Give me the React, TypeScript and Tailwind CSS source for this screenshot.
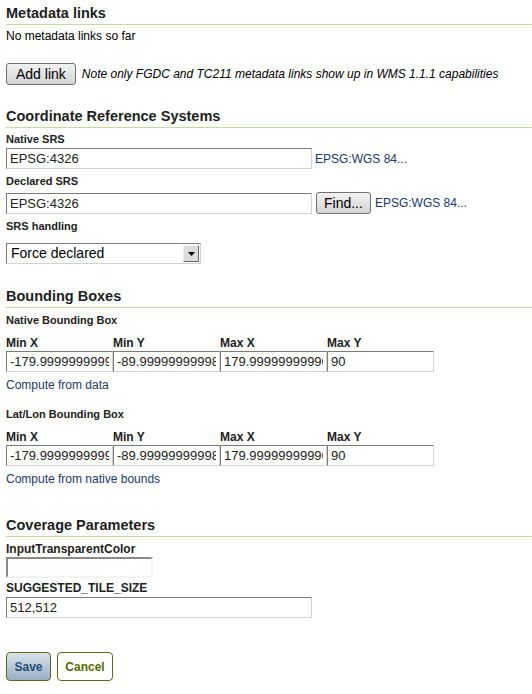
import React from "react";

const inputCls =
  "block h-[21px] border border-t-[#7c7c7c] border-l-[#7c7c7c] border-b-[#d2d2d2] border-r-[#d2d2d2] bg-white px-[3px] text-[13px] leading-[19px] text-[#222] outline-none";

function Heading({ children }: { children: React.ReactNode }) {
  return (
    <div className="border-b border-[#c5dca0] pb-[2px]">
      <h2 className="text-[14.5px] font-bold leading-[18px] text-[#1e1e1e]">{children}</h2>
    </div>
  );
}

function Label({ children }: { children: React.ReactNode }) {
  return <div className="text-[11px] font-bold leading-[13px] text-[#222]">{children}</div>;
}

function GreyButton({ children, px }: { children: React.ReactNode; px: string }) {
  return (
    <button className={`h-[22px] rounded-[3px] border border-[#707070] bg-gradient-to-b from-[#f2f2f2] to-[#d4d4d4] ${px} text-[14px] leading-[18px] text-black`}>
      {children}
    </button>
  );
}

function BBox({ title, link, top }: { title: string; link: string; top: string }) {
  const cols = [
    ["Min X", "-179.99999999999"],
    ["Min Y", "-89.99999999998"],
    ["Max X", "179.99999999996"],
    ["Max Y", "90"],
  ];
  return (
    <div className={top}>
      <Label>{title}</Label>
      <div className="mt-[9px] flex">
        {cols.map(([l, v]) => (
          <div key={l} className="w-[107px]">
            <div className="text-[12px] font-bold leading-[14px] text-[#222]">{l}</div>
            <input readOnly value={v} className={`${inputCls} mt-[1px] w-[107px] overflow-hidden`} />
          </div>
        ))}
      </div>
      <div className="mt-[6px] text-[12px] leading-[14px] text-[#21396a]">{link}</div>
    </div>
  );
}

export default function App() {
  return (
    <div className="min-h-[694px] w-[532px] bg-white pl-[6px] font-['Liberation_Sans',Arial,sans-serif] text-[12px] text-[#222]">
      <div className="pt-[4px]">
        <Heading>Metadata links</Heading>
        <div className="mt-[4px] leading-[14px] text-black">No metadata links so far</div>
        <div className="mt-[20px] flex items-center gap-[6px]">
          <GreyButton px="px-[9px]">Add link</GreyButton>
          <span className="text-[12px] italic text-black">
            Note only FGDC and TC211 metadata links show up in WMS 1.1.1 capabilities
          </span>
        </div>
      </div>

      <div className="mt-[22px]">
        <Heading>Coordinate Reference Systems</Heading>
        <div className="mt-[5px]">
          <Label>Native SRS</Label>
          <div className="mt-[2px] flex items-center">
            <input readOnly value="EPSG:4326" className={`${inputCls} w-[306px]`} />
            <span className="ml-[3px] text-[12px] text-[#21396a]">EPSG:WGS 84...</span>
          </div>
        </div>
        <div className="mt-[6px]">
          <Label>Declared SRS</Label>
          <div className="mt-[4px] flex items-center">
            <input readOnly value="EPSG:4326" className={`${inputCls} w-[306px]`} />
            <span className="ml-[4px] flex">
              <GreyButton px="px-[7px]">Find...</GreyButton>
            </span>
            <span className="ml-[4px] text-[12px] text-[#21396a]">EPSG:WGS 84...</span>
          </div>
        </div>
        <div className="mt-[6px]">
          <Label>SRS handling</Label>
          <div className="mt-[10px] flex h-[21px] w-[195px] items-center border border-t-[#7c7c7c] border-l-[#7c7c7c] border-b-[#d2d2d2] border-r-[#d2d2d2] bg-white">
            <span className="flex-1 pl-[4px] text-[14px] leading-[19px] text-black">Force declared</span>
            <span className="mr-[1px] flex h-[17px] w-[16px] items-center justify-center border border-t-[#f0f0f0] border-l-[#f0f0f0] border-b-[#6a6a6a] border-r-[#6a6a6a] bg-[#dcdcdc]">
              <svg width="7" height="4" viewBox="0 0 7 4">
                <path d="M0 0h7L3.5 4z" fill="#000" />
              </svg>
            </span>
          </div>
        </div>
      </div>

      <div className="mt-[23px]">
        <Heading>Bounding Boxes</Heading>
        <BBox top="mt-[6px]" title="Native Bounding Box" link="Compute from data" />
        <BBox top="mt-[16px]" title="Lat/Lon Bounding Box" link="Compute from native bounds" />
      </div>

      <div className="mt-[30px]">
        <Heading>Coverage Parameters</Heading>
        <div className="mt-[5px]">
          <div className="text-[12px] font-bold leading-[14px] text-[#222]">InputTransparentColor</div>
          <input readOnly value="" className="mt-[1px] block h-[21px] w-[147px] border-2 border-t-[#8a8a8a] border-l-[#8a8a8a] border-b-[#f4f4f4] border-r-[#f4f4f4] bg-white" />
        </div>
        <div className="mt-[3px]">
          <div className="text-[12px] font-bold leading-[14px] text-[#222]">SUGGESTED_TILE_SIZE</div>
          <input readOnly value="512,512" className={`${inputCls} mt-[2px] w-[306px]`} />
        </div>
      </div>

      <div className="mt-[34px] flex gap-[6px]">
        <button className="h-[29px] w-[45px] rounded-[4px] border border-[#5a6b1c] bg-gradient-to-b from-[#d8e2ea] to-[#98b0c4] text-[12px] font-bold text-[#1f4f7a]">
          Save
        </button>
        <button className="h-[29px] w-[56px] rounded-[4px] border border-[#5a6b1c] bg-white text-[12px] font-bold text-[#5a6b00]">
          Cancel
        </button>
      </div>
    </div>
  );
}
